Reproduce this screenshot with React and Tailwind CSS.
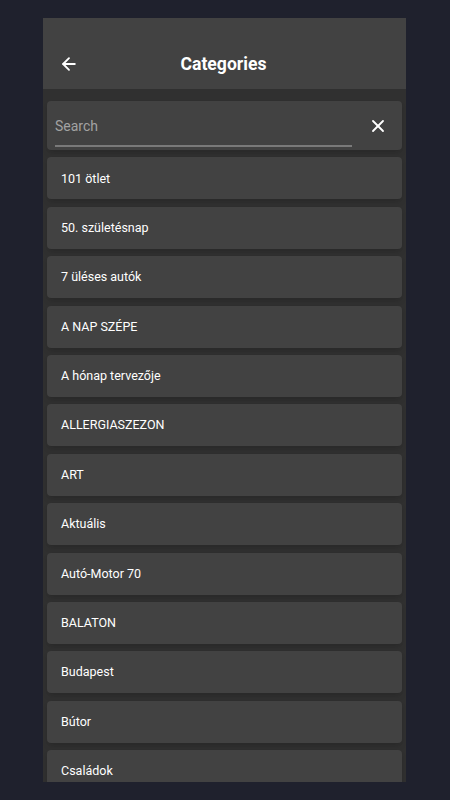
import { ArrowLeft, X } from "lucide-react";

const categories = [
  "101 ötlet",
  "50. születésnap",
  "7 üléses autók",
  "A NAP SZÉPE",
  "A hónap tervezője",
  "ALLERGIASZEZON",
  "ART",
  "Aktuális",
  "Autó-Motor 70",
  "BALATON",
  "Budapest",
  "Bútor",
  "Családok",
];

const App = () => {
  return (
    <div
      className="h-[800px] w-full bg-[#1f212d] pt-[18px] overflow-hidden"
      style={{ fontFamily: "Roboto, 'Noto Sans', sans-serif" }}
    >
      <div className="ml-[43px] w-[363px] h-[764px] bg-[#303030] overflow-hidden flex flex-col">
        {/* toolbar */}
        <div className="h-[71px] shrink-0 bg-[#424242] flex items-end">
          <div className="h-[50px] w-full flex items-center relative">
            <button className="ml-[16px] text-white">
              <ArrowLeft size={20} strokeWidth={2.2} />
            </button>
            <h1 className="absolute left-0 right-0 pr-[2px] text-center text-[17.6px] font-bold text-white pointer-events-none">
              Categories
            </h1>
          </div>
        </div>

        <div className="px-[4px] pt-[12px] flex flex-col gap-[7.4px]">
          {/* search */}
          <div className="h-[49px] shrink-0 rounded-[4px] bg-[#424242] shadow-md flex items-center pl-[8px] pr-[14px]">
            <div className="flex-1 h-full flex flex-col justify-end pb-[3px]">
              <div className="text-[14px] text-[#a3a3a3] leading-none mb-[12px]">
                Search
              </div>
              <div className="h-[2px] w-[297px] bg-[#7a7a7a]" />
            </div>
            <X size={20} strokeWidth={2.2} className="text-white" />
          </div>

          {categories.map((c) => (
            <div
              key={c}
              className="h-[42px] shrink-0 rounded-[4px] bg-[#424242] shadow-md flex items-center pl-[14px] pt-[1px] text-[12.5px] text-white"
            >
              {c}
            </div>
          ))}
        </div>
      </div>
    </div>
  );
};

export default App;
